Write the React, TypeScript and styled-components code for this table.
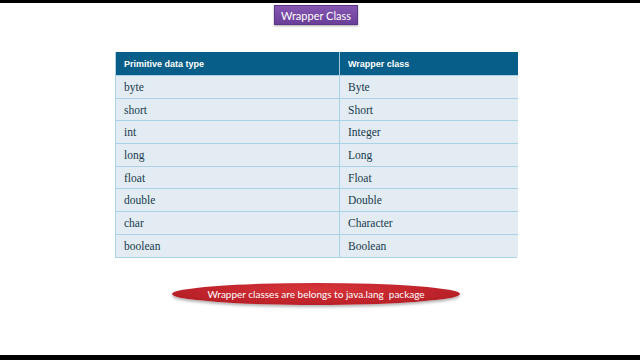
import React from "react";
import styled, { createGlobalStyle } from "styled-components";

const Global = createGlobalStyle`
  html, body { margin: 0; padding: 0; background: #ffffff; }
  #root { width: 640px; height: 360px; }
`;

const Page = styled.div`
  width: 640px;
  height: 360px;
  box-sizing: border-box;
  border-top: 3px solid #000;
  border-bottom: 5px solid #000;
  background: #fff;
  display: flex;
  flex-direction: column;
  align-items: center;
  padding-right: 8px;
  overflow: hidden;
`;

const Title = styled.div`
  margin-top: 2px;
  width: 84px;
  height: 20px;
  box-sizing: border-box;
  background: linear-gradient(#8656b4, #6a3f98);
  border: 1px solid #5b3485;
  box-shadow: 0 1px 2px rgba(0,0,0,0.35);
  color: #fff;
  font-family: Lato, "Open Sans", sans-serif;
  font-size: 11px;
  display: flex;
  align-items: center;
  justify-content: center;
`;

const Table = styled.div`
  margin-top: 27px;
  width: 402px;
  display: grid;
  grid-template-columns: 223px 179px;
  border: 1px solid #a9d2e6;
  border-top: none;
  box-sizing: border-box;
`;

const Head = styled.div<{ $last?: boolean }>`
  height: 23px;
  background: #075e88;
  color: #fff;
  font-family: "Liberation Sans", Arial, sans-serif;
  font-weight: bold;
  font-size: 9px;
  display: flex;
  align-items: center;
  padding-left: 8px;
  border-left: ${(p) => (p.$last ? "1px solid #9fc8de" : "none")};
`;

const Cell = styled.div<{ $last?: boolean }>`
  height: 22.7px;
  box-sizing: border-box;
  background: #e3ecf3;
  color: #173a4d;
  font-family: "Liberation Serif", "Times New Roman", serif;
  font-size: 11.5px;
  display: flex;
  align-items: center;
  padding-left: 8px;
  border-top: 1px solid #a9d2e6;
  border-left: ${(p) => (p.$last ? "1px solid #a9d2e6" : "none")};
`;

const Pill = styled.div`
  margin-top: 25px;
  width: 288px;
  height: 22px;
  border-radius: 50%;
  background: radial-gradient(ellipse at 50% 30%, #d6353a 0%, #c1232b 55%, #a81d24 100%);
  box-shadow: 0 2px 3px rgba(0,0,0,0.3);
  color: #fff;
  font-family: Lato, "Open Sans", sans-serif;
  font-size: 10px;
  display: flex;
  align-items: center;
  justify-content: center;
  white-space: pre;
`;

const rows: [string, string][] = [
  ["byte", "Byte"],
  ["short", "Short"],
  ["int", "Integer"],
  ["long", "Long"],
  ["float", "Float"],
  ["double", "Double"],
  ["char", "Character"],
  ["boolean", "Boolean"],
];

export default function App() {
  return (
    <>
      <Global />
      <Page>
        <Title>Wrapper Class</Title>
        <Table>
          <Head>Primitive data type</Head>
          <Head $last>Wrapper class</Head>
          {rows.map(([a, b]) => (
            <React.Fragment key={a}>
              <Cell>{a}</Cell>
              <Cell $last>{b}</Cell>
            </React.Fragment>
          ))}
        </Table>
        <Pill>Wrapper classes are belongs to java.lang  package</Pill>
      </Page>
    </>
  );
}
